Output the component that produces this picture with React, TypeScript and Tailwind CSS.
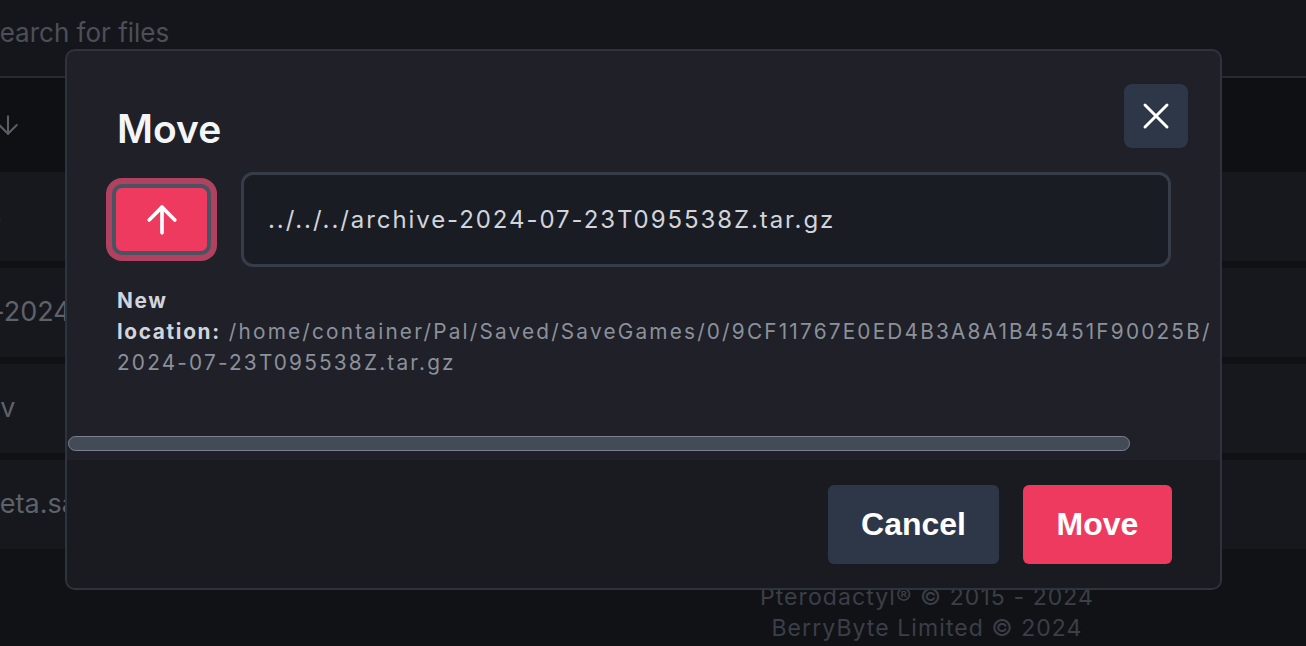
import React from 'react';
import { ArrowUp, ArrowDown, X } from 'lucide-react';

const files = [
  { name: 'Players', offset: 'ml-[-92px]' },
  { name: 'archive-2024-07-23T095538Z.tar.gz', offset: 'ml-[-101px]' },
  { name: 'Level.sav', offset: 'ml-[-104px]' },
  { name: 'LevelMeta.sav', offset: 'ml-[-92px]' },
];

const FileRow: React.FC<{ name: string; offset: string }> = ({ name, offset }) => (
  <div className="h-[89px] bg-[#17181d] flex items-center">
    <span className={`${offset} whitespace-nowrap text-[27px] text-[#5d626b]`}>{name}</span>
  </div>
);

const MoveModal: React.FC = () => (
  <div className="absolute left-[65px] top-[49px] w-[1157px] h-[541px] flex flex-col overflow-hidden rounded-[10px] border-2 border-[#2d343e] bg-[#1f2028]">
    <div className="relative pl-[50px] pr-[49px] pt-[55px] pb-[9px]">
      <button className="absolute top-[33px] right-[32px] w-16 h-16 rounded-lg bg-[#2d3748] flex items-center justify-center text-white">
        <X size={44} strokeWidth={1.6} />
      </button>
      <h2 className="text-[39px] leading-[45px] font-semibold text-[#f4f5f7]">Move</h2>
      <div className="mt-[21px] -ml-[5px] flex items-center gap-[30px]">
        <button className="w-[99px] h-[71px] rounded-[10px] border-4 border-[#4b5261] bg-[#ee3a5e] shadow-[0_0_0_6px_#b1425f] flex items-center justify-center text-white">
          <ArrowUp size={44} strokeWidth={2} />
        </button>
        <div className="flex-1 h-[95px] rounded-[12px] border-[3px] border-[#363d48] bg-[#1a1c23] px-6 flex items-center text-[24px] tracking-[0.08em] text-[#d1d5db] whitespace-nowrap">
          ../../../archive-2024-07-23T095538Z.tar.gz
        </div>
      </div>
      <p className="mt-[18px] text-[20.8px] leading-[31px] tracking-[0.105em] text-[#8b919b] whitespace-nowrap">
        <span className="font-bold tracking-[0.08em] text-[#d1d5db]">New</span>
        <br />
        <span className="font-bold tracking-[0.08em] text-[#d1d5db]">location:</span>{' '}
        /home/container/Pal/Saved/SaveGames/0/9CF11767E0ED4B3A8A1B45451F90025B/
        <br />
        2024-07-23T095538Z.tar.gz
      </p>
      <div className="mt-[58px] -ml-[49px] w-[1062px] h-[15px] rounded-full border-[1.5px] border-[#7b8190] bg-[#434b56]" />
    </div>
    <div className="flex-1 bg-[#1a1b21] flex items-center justify-end gap-6 pr-[48px] font-['Liberation_Sans',Arial,sans-serif]">
      <button className="w-[171px] h-[79px] rounded-md bg-[#2d3748] text-white text-[32px] font-bold">Cancel</button>
      <button className="w-[149px] h-[79px] rounded-md bg-[#ee3a5e] text-white text-[32px] font-bold">Move</button>
    </div>
  </div>
);

export default function App() {
  return (
    <div className="relative h-[646px] w-[1306px] overflow-hidden bg-[#111216] font-['Inter','Noto_Sans',sans-serif]">
      <div className="h-[76px] bg-[#15161b] flex items-center pb-[12px]">
        <span className="-ml-[17px] text-[26px] text-[#4b4f58]">Search for files</span>
      </div>
      <div className="h-[2px] bg-[#262b33]" />
      <div className="h-[94px] bg-[#0f1014] flex items-center">
        <ArrowDown size={30} strokeWidth={1.6} className="-ml-[7px] text-[#5a5f68]" />
      </div>
      <div className="flex flex-col gap-[7px] bg-[#101115]">
        {files.map((f) => (
          <FileRow key={f.name} name={f.name} offset={f.offset} />
        ))}
      </div>
      <div className="mt-[33px] pl-[548px] text-center text-[23px] leading-[31px] tracking-[0.047em] text-[#3a3f48]">
        <p>Pterodactyl® © 2015 - 2024</p>
        <p>BerryByte Limited © 2024</p>
      </div>
      <MoveModal />
    </div>
  );
}
